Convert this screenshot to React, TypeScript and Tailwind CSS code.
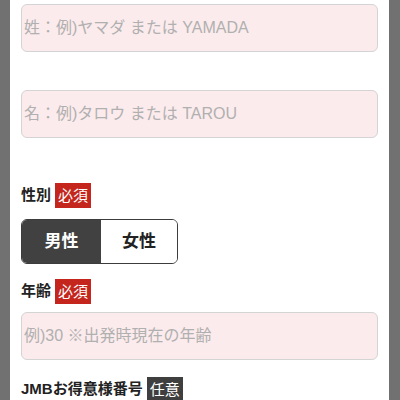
const font = { fontFamily: '"Liberation Sans", "Noto Sans CJK JP", sans-serif' };

function Badge({ kind }: { kind: 'req' | 'opt' }) {
  return (
    <span
      className={
        'ml-[4px] inline-flex h-[25px] items-center px-[3px] text-[15px] font-normal leading-none text-white ' +
        (kind === 'req' ? 'bg-[#c4261d]' : 'bg-[#3f3f3f]')
      }
    >
      {kind === 'req' ? '必須' : '任意'}
    </span>
  );
}

function Field({ placeholder }: { placeholder: string }) {
  return (
    <input
      readOnly
      placeholder={placeholder}
      className="h-[48px] w-full rounded-[6px] border border-[#d4d4d4] bg-[#fcebec] px-[2px] text-[16px] text-[#333] placeholder:text-[#b0b0b0] outline-none"
      style={font}
    />
  );
}

export default function App() {
  return (
    <div className="flex h-[400px] w-[400px] overflow-hidden bg-[#717171]" style={font}>
      <div className="ml-[10px] h-full w-[379px] bg-white px-[11px]">
        <div className="pt-[4px]">
          <Field placeholder="姓：例)ヤマダ または YAMADA" />
        </div>
        <div className="pt-[38px]">
          <Field placeholder="名：例)タロウ または TAROU" />
        </div>
        <div className="mt-[45px] flex items-center text-[15px] font-bold text-[#222]">
          性別
          <Badge kind="req" />
        </div>
        <div className="mt-[11px] flex h-[45px] w-[157px] overflow-hidden rounded-[6px] border border-[#3c3c3c] text-[17px] font-bold">
          <div className="flex w-[79px] items-center justify-center bg-[#414141] text-white">男性</div>
          <div className="flex flex-1 items-center justify-center bg-white text-[#222]">女性</div>
        </div>
        <div className="mt-[15px] flex items-center text-[15px] font-bold text-[#222]">
          年齢
          <Badge kind="req" />
        </div>
        <div className="mt-[8px]">
          <Field placeholder="例)30 ※出発時現在の年齢" />
        </div>
        <div className="mt-[17px] flex items-center text-[15px] font-bold text-[#222]">
          JMBお得意様番号
          <Badge kind="opt" />
        </div>
      </div>
    </div>
  );
}
